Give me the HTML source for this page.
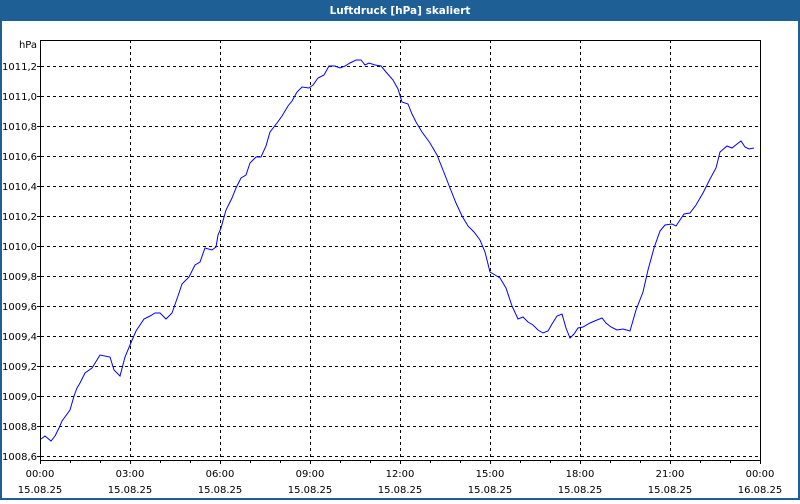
<!DOCTYPE html>
<html><head><style>
body{margin:0;width:800px;height:500px;overflow:hidden;background:#fff;font-family:"DejaVu Sans","Liberation Sans",sans-serif;}
</style></head><body>
<svg width="800" height="500" xmlns="http://www.w3.org/2000/svg" font-family="DejaVu Sans, Liberation Sans, sans-serif" font-size="10">
<rect x="0" y="0" width="800" height="500" fill="#1e5f96"/>
<rect x="2" y="21" width="796" height="477" fill="#fff"/>
<text x="400" y="14" fill="#fff" font-weight="bold" text-anchor="middle" font-size="10.5">Luftdruck [hPa] skaliert</text>
<g stroke="#000" stroke-dasharray="3,3" stroke-width="1">
<line x1="41" y1="66.5" x2="760" y2="66.5"/>
<line x1="41" y1="96.5" x2="760" y2="96.5"/>
<line x1="41" y1="126.5" x2="760" y2="126.5"/>
<line x1="41" y1="156.5" x2="760" y2="156.5"/>
<line x1="41" y1="186.5" x2="760" y2="186.5"/>
<line x1="41" y1="216.5" x2="760" y2="216.5"/>
<line x1="41" y1="246.5" x2="760" y2="246.5"/>
<line x1="41" y1="276.5" x2="760" y2="276.5"/>
<line x1="41" y1="306.5" x2="760" y2="306.5"/>
<line x1="41" y1="336.5" x2="760" y2="336.5"/>
<line x1="41" y1="366.5" x2="760" y2="366.5"/>
<line x1="41" y1="396.5" x2="760" y2="396.5"/>
<line x1="41" y1="426.5" x2="760" y2="426.5"/>
<line x1="41" y1="456.5" x2="760" y2="456.5"/>
<line x1="130.5" y1="40" x2="130.5" y2="460"/>
<line x1="220.5" y1="40" x2="220.5" y2="460"/>
<line x1="310.5" y1="40" x2="310.5" y2="460"/>
<line x1="400.5" y1="40" x2="400.5" y2="460"/>
<line x1="490.5" y1="40" x2="490.5" y2="460"/>
<line x1="580.5" y1="40" x2="580.5" y2="460"/>
<line x1="670.5" y1="40" x2="670.5" y2="460"/>
</g>
<g stroke="#000" stroke-width="1">
<line x1="40.5" y1="40" x2="40.5" y2="461"/>
<line x1="40" y1="460.5" x2="760" y2="460.5"/>
<line x1="40" y1="40.5" x2="760" y2="40.5"/>
<line x1="760.5" y1="40" x2="760.5" y2="461"/>
<path d="M40.5 460v4M70.5 460v3M100.5 460v3M130.5 460v4M160.5 460v3M190.5 460v3M220.5 460v4M250.5 460v3M280.5 460v3M310.5 460v4M340.5 460v3M370.5 460v3M400.5 460v4M430.5 460v3M460.5 460v3M490.5 460v4M520.5 460v3M550.5 460v3M580.5 460v4M610.5 460v3M640.5 460v3M670.5 460v4M700.5 460v3M730.5 460v3M760.5 460v4"/>
<path d="M37 66.5h4M37 96.5h4M37 126.5h4M37 156.5h4M37 186.5h4M37 216.5h4M37 246.5h4M37 276.5h4M37 306.5h4M37 336.5h4M37 366.5h4M37 396.5h4M37 426.5h4M37 456.5h4"/>
</g>
<g text-anchor="end" fill="#000">
<text x="37" y="48">hPa</text>
<text x="37" y="70">1011,2</text><text x="37" y="100">1011,0</text><text x="37" y="130">1010,8</text>
<text x="37" y="160">1010,6</text><text x="37" y="190">1010,4</text><text x="37" y="220">1010,2</text>
<text x="37" y="250">1010,0</text><text x="37" y="280">1009,8</text><text x="37" y="310">1009,6</text>
<text x="37" y="340">1009,4</text><text x="37" y="370">1009,2</text><text x="37" y="400">1009,0</text>
<text x="37" y="430">1008,8</text><text x="37" y="460">1008,6</text>
</g>
<g text-anchor="middle" fill="#000">
<text x="40" y="477">00:00</text><text x="40" y="493">15.08.25</text>
<text x="130" y="477">03:00</text><text x="130" y="493">15.08.25</text>
<text x="220" y="477">06:00</text><text x="220" y="493">15.08.25</text>
<text x="310" y="477">09:00</text><text x="310" y="493">15.08.25</text>
<text x="400" y="477">12:00</text><text x="400" y="493">15.08.25</text>
<text x="490" y="477">15:00</text><text x="490" y="493">15.08.25</text>
<text x="580" y="477">18:00</text><text x="580" y="493">15.08.25</text>
<text x="670" y="477">21:00</text><text x="670" y="493">15.08.25</text>
<text x="760" y="477">00:00</text><text x="760" y="493">16.08.25</text>
</g>
<polyline fill="none" stroke="#0000ff" stroke-width="1" points="41,439 45,436 51,441 55,436 59,428 62,421 70,410 74,396 77,388 80,383 85,373 92,368 100,355 110,357 114,370 120,376 125,357 130,345 136,331 144,319 150,316 155,313 160,313 166,319 172,313 179,293 182,284 189,277 195,265 200,262 205,248 212,250 216,247 218,235 221,228 226,210 232,198 236,188 241,178 246,175 250,163 256,157 261,157 266,146 270,132 277,123 282,116 288,106 292,101 297,92 302,87 309,88 313,85 318,78 324,75 329,66 335,66 340,68 345,66 350,63 356,60 361,60 365,65 369,63 375,65 381,66 386,72 393,80 398,89 402,102 408,104 412,114 416,122 422,132 430,143 437,155 443,170 450,188 456,203 462,216 468,226 474,232 480,240 485,252 490,272 495,275 500,278 506,288 512,306 518,319 523,317 528,322 533,325 538,330 543,333 548,331 552,324 557,316 562,314 566,328 570,338 574,334 578,328 583,327 590,323 597,320 602,318 606,323 611,327 617,330 623,329 630,331 636,310 643,292 648,270 654,248 660,231 665,225 672,224 676,226 680,220 684,214 690,213 696,205 703,193 710,179 716,168 720,152 727,146 732,148 737,144 741,141 745,147 749,149 754,148"/>
</svg>
</body></html>
